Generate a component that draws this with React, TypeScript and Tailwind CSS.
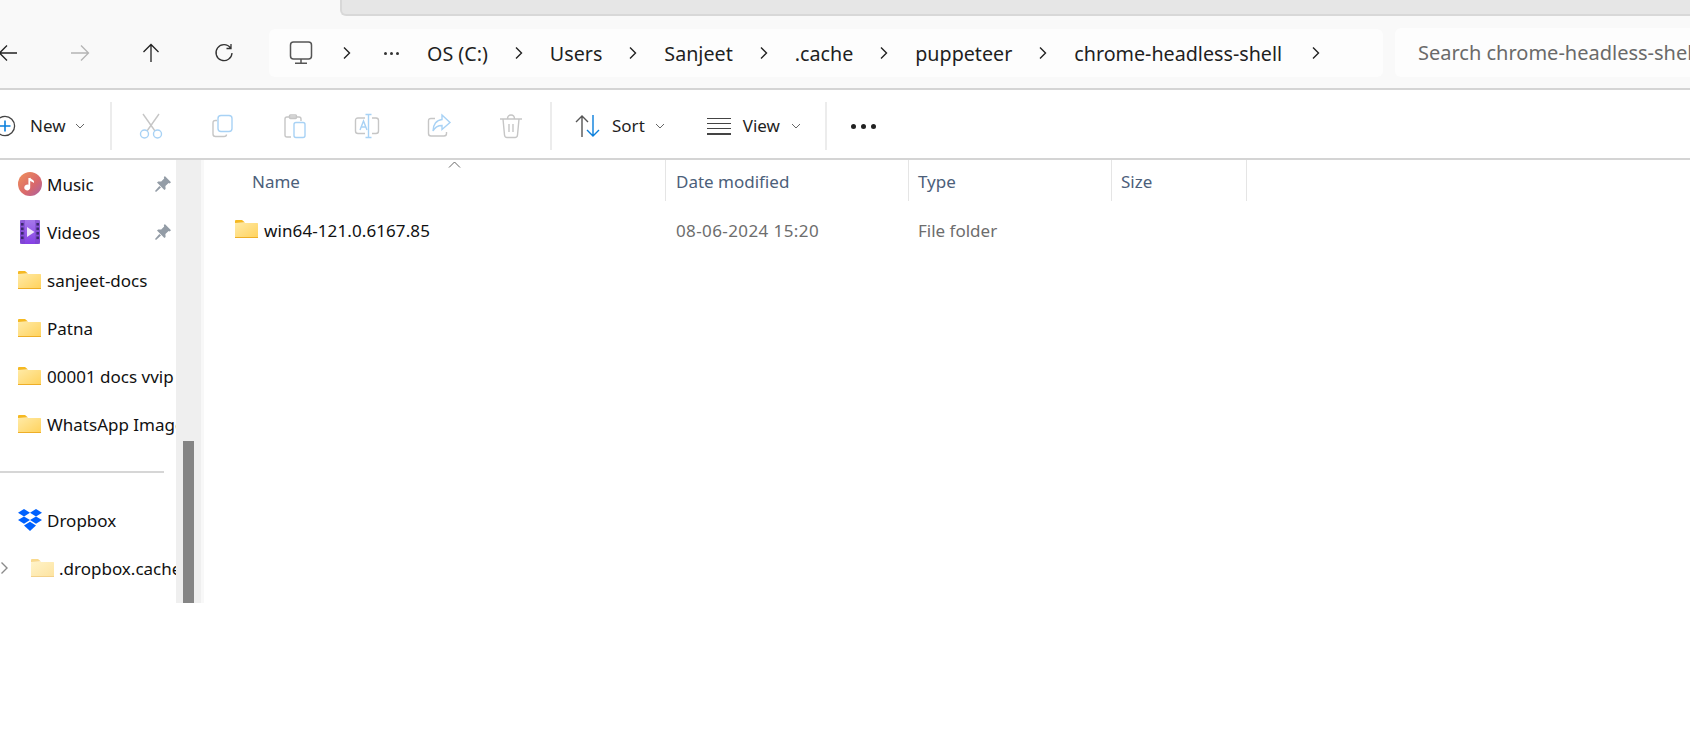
import React from "react";

const font = { fontFamily: '"Noto Sans", "Open Sans", sans-serif' };

function Chevron({ className = "" }: { className?: string }) {
  return (
    <svg width="10" height="16" viewBox="0 0 10 16" className={`shrink-0 ${className}`} fill="none" stroke="#222" strokeWidth="1.4">
      <path d="M2 2.5 L7.5 8 L2 13.5" />
    </svg>
  );
}

function SmallCaret() {
  return (
    <svg width="10" height="6" viewBox="0 0 10 6" fill="none" stroke="#666" strokeWidth="1" className="shrink-0">
      <path d="M1 1 L5 5 L9 1" />
    </svg>
  );
}

function Folder({ pale = false }: { pale?: boolean }) {
  const id = pale ? "fp" : "fn";
  return (
    <svg width="23" height="18" viewBox="0 0 23 18" className="shrink-0">
      <defs>
        <linearGradient id={id} x1="0" y1="0" x2="1" y2="1">
          <stop offset="0" stopColor={pale ? "#fff3c8" : "#ffeaa6"} />
          <stop offset="1" stopColor={pale ? "#fde3a0" : "#ffd25c"} />
        </linearGradient>
      </defs>
      <path d="M0 1 Q0 0 1 0 H7 L10 2.5 H9 L0 3 Z" fill={pale ? "#f9d98c" : "#f5b922"} />
      <rect x="0" y="3" width="23" height="15" rx="0.5" fill={`url(#${id})`} />
      <rect x="0" y="17" width="23" height="1" fill={pale ? "#f3d18a" : "#eeae27"} />
    </svg>
  );
}

function Music() {
  return (
    <svg width="24" height="24" viewBox="0 0 24 24" className="shrink-0">
      <defs>
        <linearGradient id="mg" x1="0" y1="0" x2="1" y2="1">
          <stop offset="0" stopColor="#f0915a" />
          <stop offset="0.6" stopColor="#d8686c" />
          <stop offset="1" stopColor="#a862a8" />
        </linearGradient>
      </defs>
      <circle cx="12" cy="12" r="12" fill="url(#mg)" />
      <path d="M12.2 5 V14.2 A3 3 0 1 1 10.4 11.8 V5 Z" fill="#fff" transform="translate(0 1)" />
      <path d="M12 5.5 C13 7.5 15.5 7.5 16 9.5 L16 11 C14.5 9.5 13 9.5 12 9 Z" fill="#fff" />
    </svg>
  );
}

function Videos() {
  const holes = [3, 7.5, 12, 16.5];
  return (
    <svg width="22" height="24" viewBox="0 0 22 24" className="shrink-0">
      <defs>
        <linearGradient id="vg" x1="0" y1="0" x2="0" y2="1">
          <stop offset="0" stopColor="#a678ea" />
          <stop offset="1" stopColor="#8440e4" />
        </linearGradient>
      </defs>
      <rect x="1" y="0" width="20" height="24" rx="2" fill="url(#vg)" />
      <rect x="1" y="0" width="5" height="24" fill="#7a45c8" opacity="0.55" />
      <rect x="16" y="0" width="5" height="24" fill="#7a45c8" opacity="0.55" />
      {holes.map((y) => (
        <g key={y} fill="#3c2a6e">
          <rect x="2" y={y} width="2.6" height="2.6" />
          <rect x="17.4" y={y} width="2.6" height="2.6" />
        </g>
      ))}
      <path d="M8 7 L15.5 12 L8 17 Z" fill="#efe6fb" />
    </svg>
  );
}

function Pin() {
  return (
    <svg width="16" height="16" viewBox="0 0 16 16" className="shrink-0" fill="#939ca6">
      <path d="M9.8 0 L16 6.2 L14.6 7.4 L13.6 7 L10.4 10 L10.6 13 L9.4 14 L2 6.6 L3.2 5.4 L6.2 5.6 L9.2 2.4 L8.8 1.4 Z" />
      <path d="M4.4 10 L6 11.6 L1 16 L0 15 Z" />
    </svg>
  );
}

function Dropbox() {
  return (
    <svg width="24" height="22" viewBox="0 0 24 22" className="shrink-0" fill="#0061fe">
      <path d="M6 0 L12 3.7 L6 7.4 L0 3.7 Z" />
      <path d="M18 0 L24 3.7 L18 7.4 L12 3.7 Z" />
      <path d="M6 7.4 L12 11 L6 14.7 L0 11 Z" />
      <path d="M18 7.4 L24 11 L18 14.7 L12 11 Z" />
      <path d="M12 12.8 L18 16.4 L12 22 L6 16.4 Z" />
    </svg>
  );
}

const G = "#c6c6c6";
const B = "#a8d2f5";

function ToolIcon({ children }: { children: React.ReactNode }) {
  return (
    <div className="w-[72px] flex items-center justify-center shrink-0">
      <svg width="26" height="26" viewBox="0 0 26 26" fill="none" strokeWidth="1.4">
        {children}
      </svg>
    </div>
  );
}

function Divider() {
  return <div className="w-[2px] h-[48px] bg-[#ececec] shrink-0" />;
}

function NavIcon({ d, color, className }: { d: string; color: string; className: string }) {
  return (
    <svg width="20" height="20" viewBox="0 0 20 20" fill="none" stroke={color} strokeWidth="1.3" className={`shrink-0 ${className}`}>
      <path d={d} />
    </svg>
  );
}

function SideRow({ icon, label, pin, indent }: { icon: React.ReactNode; label: string; pin?: boolean; indent?: boolean }) {
  return (
    <div className="h-[48px] flex items-center relative shrink-0">
      {indent ? (
        <svg width="10" height="16" viewBox="0 0 10 16" fill="none" stroke="#8a8a8a" strokeWidth="1.4" className="ml-0 mr-[21px] shrink-0">
          <path d="M1.5 2.5 L7 8 L1.5 13.5" />
        </svg>
      ) : (
        <div className="w-[18px] shrink-0" />
      )}
      <div className={indent ? "w-[28px] shrink-0" : "w-[29px] shrink-0"}>{icon}</div>
      <span className="text-[17px] pt-[2px] text-[#111] whitespace-nowrap">{label}</span>
      {pin && (
        <div className="absolute left-[155px] top-[16px]">
          <Pin />
        </div>
      )}
    </div>
  );
}

export default function App() {
  const crumbs = ["Users", "Sanjeet", ".cache", "puppeteer", "chrome-headless-shell"];
  return (
    <div className="w-[1690px] h-[749px] overflow-hidden bg-white flex flex-col" style={font}>
      {/* tab strip */}
      <div className="h-[16px] bg-[#f9f9f9] pl-[340px] shrink-0">
        <div className="h-[16px] bg-[#e6e6e6] border-l-2 border-b-2 border-[#d8d8d8] rounded-bl-[6px]" />
      </div>

      {/* address row */}
      <div className="h-[74px] bg-[#f9f9f9] border-b-2 border-[#d4d4d4] flex items-start shrink-0 pt-[13px]">
        <div className="w-[269px] h-[48px] flex items-center shrink-0">
          <NavIcon className="ml-[-2px]" color="#222" d="M19 10 H1.5 M9 2.5 L1.5 10 L9 17.5" />
          <NavIcon className="ml-[52px]" color="#b4b4b4" d="M1 10 H18.5 M11 2.5 L18.5 10 L11 17.5" />
          <NavIcon className="ml-[51px]" color="#222" d="M10 19 V1.5 M2.5 9 L10 1.5 L17.5 9" />
          <NavIcon className="ml-[53px]" color="#333" d="M16.5 5 A8 8 0 1 0 18 10 M17 1 V5.5 H12.5" />
        </div>
        <div className="w-[1114px] h-[48px] bg-[#fdfdfd] rounded-[6px] flex items-center gap-[26px] pl-[20px] shrink-0">
          <svg width="24" height="24" viewBox="0 0 24 24" fill="none" stroke="#555" strokeWidth="1.5" className="shrink-0">
            <rect x="1.5" y="1" width="21" height="17" rx="3" />
            <path d="M12 18 V22 M6 22.3 H18" />
          </svg>
          <Chevron className="ml-[3px]" />
          <div className="flex gap-[3px] ml-[6px] shrink-0">
            <span className="w-[3px] h-[3px] rounded-full bg-[#333]" />
            <span className="w-[3px] h-[3px] rounded-full bg-[#333]" />
            <span className="w-[3px] h-[3px] rounded-full bg-[#333]" />
          </div>
          <span className="text-[19.7px] pt-[1px] text-[#1f1f1f] whitespace-nowrap ml-[2px]">OS (C:)</span>
          {crumbs.map((c) => (
            <React.Fragment key={c}>
              <Chevron />
              <span className="text-[19.7px] pt-[1px] text-[#1f1f1f] whitespace-nowrap">{c}</span>
            </React.Fragment>
          ))}
          <Chevron className="ml-[3px]" />
        </div>
        <div className="flex-1 h-[49px] ml-[12px] mt-[-1px] bg-[#fdfdfd] rounded-l-[6px] flex items-center pl-[23px] overflow-hidden">
          <span className="text-[20px] pt-[1px] text-[#6a6a6a] whitespace-nowrap">Search chrome-headless-shell</span>
        </div>
      </div>

      {/* toolbar */}
      <div className="h-[70px] bg-white border-b-2 border-[#d4d4d4] flex items-center shrink-0 pt-[4px] text-[#1f1f1f]">
        <div className="w-[110px] flex items-center shrink-0">
          <svg width="22" height="22" viewBox="0 0 22 22" fill="none" className="ml-[-6px] shrink-0">
            <circle cx="11" cy="11" r="9.6" stroke="#444" strokeWidth="1.3" />
            <path d="M11 5.5 V16.5 M5.5 11 H16.5" stroke="#0a7fdc" strokeWidth="1.6" />
          </svg>
          <span className="text-[17px] ml-[14px]">New</span>
          <span className="ml-[9px] flex"><SmallCaret /></span>
        </div>
        <Divider />
        <div className="flex ml-[3px] shrink-0">
          <ToolIcon>
            <path d="M5 1 L17 18" stroke={G} />
            <path d="M21 1 L9 18" stroke={G} />
            <circle cx="6.5" cy="21" r="4" stroke={B} />
            <circle cx="19.5" cy="21" r="4" stroke={B} />
          </ToolIcon>
          <ToolIcon>
            <path d="M7 7.5 H5.5 Q3 7.5 3 10 V21 Q3 23.5 5.5 23.5 H14 Q16.5 23.5 16.5 21.5" stroke={G} />
            <rect x="8" y="2.5" width="14" height="16" rx="3" stroke={B} />
          </ToolIcon>
          <ToolIcon>
            <path d="M9 24 H5 Q3 24 3 22 V6 Q3 4 5 4 H17 Q19 4 19 6 V8" stroke={G} />
            <rect x="7.5" y="2" width="7" height="3.5" rx="1" stroke={G} />
            <rect x="12" y="9.5" width="11" height="15" rx="2" stroke={B} />
          </ToolIcon>
          <ToolIcon>
            <path d="M11 5 H4 Q1.5 5 1.5 7.5 V18 Q1.5 20.5 4 20.5 H11 M18 5 H22 Q24.5 5 24.5 7.5 V18 Q24.5 20.5 22 20.5 H18" stroke={G} />
            <path d="M6 17 L9.5 8 L13 17 M7.2 14 H11.8" stroke={B} />
            <path d="M14.5 1.5 V24.5 M11.5 1.5 H17.5 M11.5 24.5 H17.5" stroke={B} />
          </ToolIcon>
          <ToolIcon>
            <path d="M9 5.5 H5 Q2.5 5.5 2.5 8 V20.5 Q2.5 23 5 23 H18 Q20.5 23 20.5 20.5 V19" stroke={G} />
            <path d="M16 2 L24 9.5 L16 16.5 V12.5 C12 12.5 9 14 7 18 C7 11.5 10.5 7 16 6.5 Z" stroke={B} />
          </ToolIcon>
          <ToolIcon>
            <path d="M2 6 H24 M5 6 L6.5 22 Q6.7 24.5 9 24.5 H17 Q19.3 24.5 19.5 22 L21 6 M9.5 6 Q9.5 2 13 2 Q16.5 2 16.5 6 M11 11 V19 M15 11 V19" stroke={G} />
          </ToolIcon>
        </div>
        <div className="ml-[3px] shrink-0"><Divider /></div>
        <svg width="26" height="24" viewBox="0 0 26 24" fill="none" strokeWidth="1.4" className="ml-[23px] shrink-0">
          <path d="M7 23 V2 M1 8 L7 2 L13 8" stroke="#555" />
          <path d="M18 1 V22 M12 16 L18 22 L24 16" stroke="#0a7fdc" />
        </svg>
        <span className="text-[17px] ml-[11px]">Sort</span>
        <span className="ml-[10px] flex"><SmallCaret /></span>
        <div className="ml-[42px] w-[24px] flex flex-col gap-[4px] shrink-0">
          <div className="h-[1px] bg-[#444]" />
          <div className="h-[1px] bg-[#444]" />
          <div className="h-[1px] bg-[#444]" />
          <div className="h-[2px] bg-[#444]" />
        </div>
        <span className="text-[17px] ml-[12px]">View</span>
        <span className="ml-[11px] flex"><SmallCaret /></span>
        <div className="ml-[24px] shrink-0"><Divider /></div>
        <div className="flex gap-[5px] ml-[24px] shrink-0">
          <span className="w-[5px] h-[5px] rounded-full bg-[#222]" />
          <span className="w-[5px] h-[5px] rounded-full bg-[#222]" />
          <span className="w-[5px] h-[5px] rounded-full bg-[#222]" />
        </div>
      </div>

      {/* body */}
      <div className="h-[443px] flex shrink-0">
        <div className="w-[176px] overflow-hidden flex flex-col shrink-0">
          <SideRow icon={<Music />} label="Music" pin />
          <SideRow icon={<div className="ml-[1px]"><Videos /></div>} label="Videos" pin />
          <SideRow icon={<Folder />} label="sanjeet-docs" />
          <SideRow icon={<Folder />} label="Patna" />
          <SideRow icon={<Folder />} label="00001 docs vvip" />
          <SideRow icon={<Folder />} label="WhatsApp Images" />
          <div className="w-[164px] h-[2px] my-[23px] bg-[#d6d6d6] shrink-0" />
          <SideRow icon={<Dropbox />} label="Dropbox" />
          <SideRow indent icon={<Folder pale />} label=".dropbox.cache" />
        </div>
        <div className="w-[25px] bg-[#efefef] pl-[7px] flex flex-col justify-end shrink-0">
          <div className="w-[11px] h-[162px] bg-[#858585]" />
        </div>
        <div className="w-[3px] bg-[#f8f8f8] shrink-0" />
        <div className="flex-1 flex flex-col">
          <div className="h-[41px] flex items-center relative text-[17px] text-[#4c607a] shrink-0">
            <svg width="13" height="7" viewBox="0 0 13 7" fill="none" stroke="#666" strokeWidth="1" className="absolute left-[244px] top-[1px]">
              <path d="M1 6.5 L6.5 1 L12 6.5" />
            </svg>
            <div className="w-[461px] pl-[48px] pt-[3px] shrink-0">Name</div>
            <div className="w-[243px] h-full flex items-center pl-[10px] pt-[3px] border-l border-[#e5e5e5] shrink-0">Date modified</div>
            <div className="w-[203px] h-full flex items-center pl-[9px] pt-[3px] border-l border-[#e5e5e5] shrink-0">Type</div>
            <div className="w-[136px] h-full flex items-center pl-[9px] pt-[3px] border-x border-[#e5e5e5] shrink-0">Size</div>
          </div>
          <div className="h-[48px] mt-[6px] flex items-center text-[17px] shrink-0">
            <div className="w-[462px] pl-[31px] flex items-center gap-[6px] shrink-0">
              <div className="mt-[-4px] shrink-0"><Folder /></div>
              <span className="text-[#111] tracking-[0.1px]">win64-121.0.6167.85</span>
            </div>
            <div className="w-[243px] pl-[10px] text-[#6d6d6d] tracking-[0.4px] shrink-0">08-06-2024 15:20</div>
            <div className="w-[202px] pl-[9px] text-[#6d6d6d] shrink-0">File folder</div>
          </div>
        </div>
      </div>
    </div>
  );
}
